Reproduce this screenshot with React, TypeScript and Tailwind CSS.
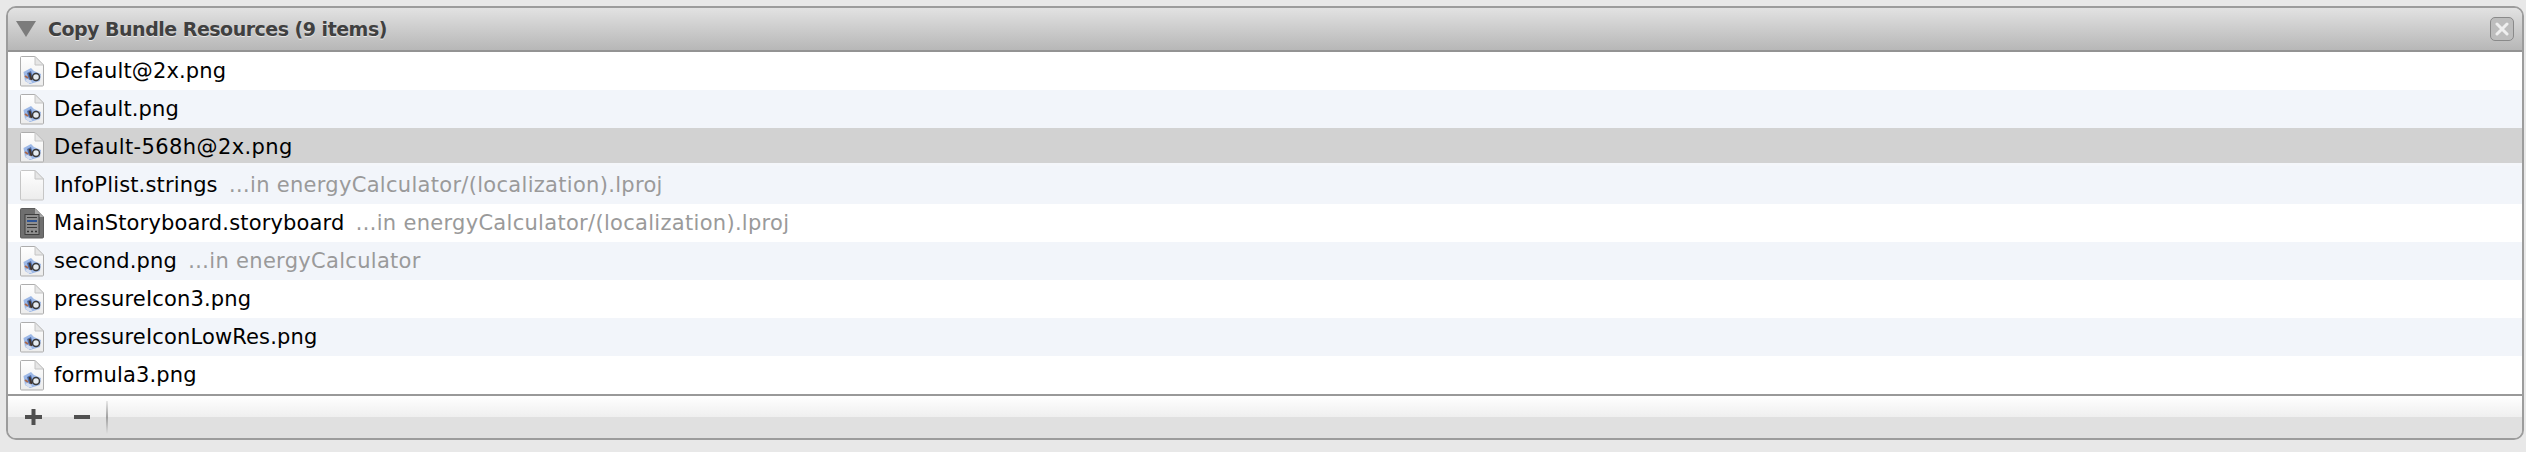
type FileKind = "image" | "blank" | "storyboard";

interface FileRow {
    name: string
    location?: string
    kind: FileKind
}

const files: FileRow[] = [
    { name: "Default@2x.png", kind: "image" },
    { name: "Default.png", kind: "image" },
    { name: "Default-568h@2x.png", kind: "image" },
    { name: "InfoPlist.strings", location: "…in energyCalculator/(localization).lproj", kind: "blank" },
    { name: "MainStoryboard.storyboard", location: "…in energyCalculator/(localization).lproj", kind: "storyboard" },
    { name: "second.png", location: "…in energyCalculator", kind: "image" },
    { name: "pressureIcon3.png", kind: "image" },
    { name: "pressureIconLowRes.png", kind: "image" },
    { name: "formula3.png", kind: "image" },
];

function FileIcon({ kind }: { kind: FileKind }) {
    const body = "M1.5 .5H15L23.5 9V29a1 1 0 0 1-1 1H1.5a1 1 0 0 1-1-1V1.500a1 1 0 0 1 1-1Z";
    if (kind === "storyboard") {
        return (
            <svg width="24" height="31" viewBox="0 0 24 31" className="shrink-0">
                <path d={body} fill="#6f6f6f" stroke="#5c5c5c" />
                <path d="M15 .5V9H23.5Z" fill="#a8a8a8" />
                <rect x="5" y="6.500" width="14" height="20" fill="#8f8f8f" stroke="#3f3f3f" />
                <path d="M7 9.500h10M7 16.500h10M7 19.500h10" stroke="#3d3d3d" strokeWidth="1" />
                <path d="M7 13h10" stroke="#2f5596" strokeWidth="2" />
                <path d="M7 23.500h2M11 23.500h2M15 23.500h2" stroke="#333" strokeWidth="1.500" />
            </svg>
        );
    }
    return (
        <svg width="24" height="31" viewBox="0 0 24 31" className="shrink-0">
            <defs>
                <linearGradient id="paper" x1="0" y1="0" x2="0" y2="1">
                    <stop offset="0" stopColor="#ffffff" />
                    <stop offset="1" stopColor="#ececec" />
                </linearGradient>
            </defs>
            <path d={body} fill="url(#paper)" stroke={kind === "blank" ? "#c6c6c6" : "#adadad"} />
            <path d="M15 .5V9H23.5Z" fill="#e6e6e6" stroke="#c4c4c4" />
            {kind === "image" && (
                <g>
                    <path d="M3.500 16L11 12L14 15L21 18L20 25L10 28L5 25Z" fill="#9db8e6" />
                    <path d="M5 24L10 22L12 27L8 27Z" fill="#d5deef" />
                    <path d="M7 17L11 15L13 22L9 24Z" fill="#4a68a4" />
                    <path d="M9.500 17L11.500 24" stroke="#44342a" strokeWidth="2" />
                    <path d="M5 20L8 22" stroke="#a8684c" strokeWidth="2" />
                    <circle cx="16" cy="21" r="3.500" fill="#e6ebf0" stroke="#3a3a3a" strokeWidth="1.500" />
                </g>
            )}
        </svg>
    );
}

function rowBackground(index: number) {
    if (index === 2) return "bg-linear-to-b from-[#d2d2d2] from-[35px] to-[#f4f6fa] to-[35px]";
    return index % 2 === 0 ? "bg-white" : "bg-[#f2f5fa]";
}

export default function App() {
    return (
        <div className="w-[2526px] h-[452px] bg-[#e8e8e8] pt-[6px] pl-[6px] pr-[2px] font-['DejaVu_Sans',sans-serif]">
            <div className="h-[434px] border-2 border-[#9c9c9c] rounded-[10px] overflow-hidden flex flex-col">
                <div className="h-[44px] shrink-0 flex items-center justify-between bg-linear-to-b from-[#e2e2e2] to-[#b7b7b7] border-b-2 border-[#939393] pl-[8px] pr-[8px]">
                    <div className="flex items-center">
                        <svg width="20" height="16" viewBox="0 0 20 16">
                            <path d="M0 0H20L10 16Z" fill="#7c7c7c" />
                        </svg>
                        <span className="ml-[12px] text-[19px] leading-none font-bold text-[#404040] tracking-[-0.5px] [text-shadow:0_1px_0_#e8e8e8]">
                            Copy Bundle Resources (9 items)
                        </span>
                    </div>
                    <div className="w-[24px] h-[24px] rounded-[5px] border border-[#8a8a8a] bg-[#bdbdbd] flex items-center justify-center">
                        <svg width="14" height="14" viewBox="0 0 14 14">
                            <path d="M2 2L12 12M12 2L2 12" stroke="#efefef" strokeWidth="3" strokeLinecap="round" />
                        </svg>
                    </div>
                </div>
                <div className="flex-1 bg-white">
                    {files.map((file, index) => (
                        <div
                            key={file.name}
                            className={`h-[38px] flex items-center pl-[12px] ${rowBackground(index)}`}
                        >
                            <FileIcon kind={file.kind} />
                            <span className={`ml-[10px] text-[21px] leading-none text-black whitespace-nowrap ${index === 2 ? "tracking-[0.4px]" : "tracking-[0.15px]"}`}>
                                {file.name}
                            </span>
                            {file.location && (
                                <span className="ml-[11px] text-[21px] leading-none text-[#9a9a9a] tracking-[0.3px] whitespace-nowrap">
                                    {file.location}
                                </span>
                            )}
                        </div>
                    ))}
                </div>
                <div className="h-[44px] shrink-0 border-t-2 border-[#999999] flex flex-col relative">
                    <div className="h-[21px] bg-linear-to-b from-white to-[#efefef]" />
                    <div className="flex-1 bg-[#e0e0e0]" />
                    <div className="absolute inset-0 flex items-center pl-[17px]">
                        <svg width="17" height="16" viewBox="0 0 17 16" className="shrink-0">
                            <path d="M6.500 0H10.500V6H17V10H10.500V16H6.500V10H0V6H6.500Z" fill="#505050" />
                        </svg>
                        <svg width="16" height="4" viewBox="0 0 16 4" className="shrink-0 ml-[32px]">
                            <rect width="16" height="4" fill="#505050" />
                        </svg>
                        <div className="ml-[16px] w-[2px] h-[33px] bg-linear-to-b from-[#e8e8e8] via-[#a0a0a0] to-[#e0e0e0]" />
                    </div>
                </div>
            </div>
        </div>
    );
}
